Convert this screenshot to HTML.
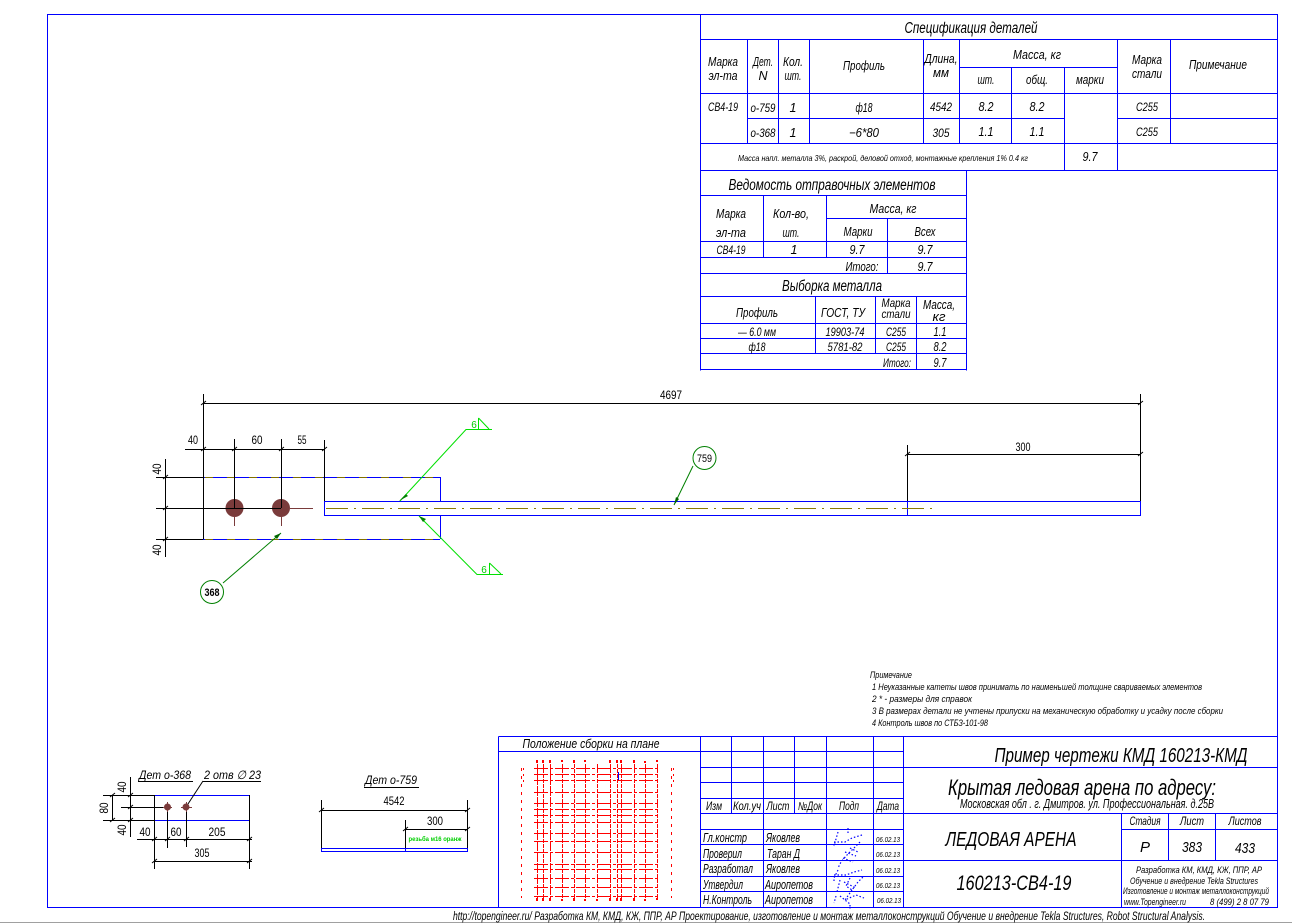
<!DOCTYPE html>
<html><head><meta charset="utf-8"><style>
html,body{margin:0;padding:0;background:#fff;width:1292px;height:923px;overflow:hidden}
svg{display:block;position:absolute;left:0;top:0}
.l{fill:none;stroke:#0000ff;stroke-width:1;shape-rendering:crispEdges}
.k{fill:none;stroke:#000;stroke-width:1;shape-rendering:crispEdges}
text{font-family:"Liberation Sans",sans-serif;font-style:italic;fill:#000;text-anchor:middle}
.s{text-anchor:start}
.d{font-style:normal}
</style></head><body>
<svg width="1292" height="923" viewBox="0 0 1292 923" xmlns="http://www.w3.org/2000/svg">
<rect width="1292" height="923" fill="#fff"/>
<path d="M0 922.5H1292" stroke="#a0a0a0" stroke-width="1" shape-rendering="crispEdges"/>
<!-- frames -->
<path class="l" d="M47.5 14.5H1277.5V907.5H47.5Z"/>
<!-- spec table -->
<path class="l" d="M700.5 14.5V370.5M700.5 39.5H1277M959 67.5H1117M700.5 93.5H1277M747 118.5H1064M1117 118.5H1277M700.5 143.5H1277M700.5 170.5H1277M747.5 39V143M778.5 39V143M809.5 39V143M923.5 39V143M959.5 39V143M1011.5 67V143M1064.5 67V170M1117.5 39V170M1170.5 39V143"/>
<!-- dispatch table -->
<path class="l" d="M966.5 170V370.5M700 195.5H966M826 218.5H966M700 241.5H966M700 257.5H966M700 273.5H966M700 296.5H966M700 323.5H966M700 338.5H966M700 353.5H966M700 369.5H966M763.5 195V257M826.5 195V257M887.5 218V273M815.5 296V353M875.5 296V353M916.5 296V369"/>
<!-- title block -->
<path class="l" d="M498.5 736.5H1277M498.5 736.5V907M498.5 751.5H700M700.5 736V907M731.5 736V813M763.5 736V907M794.5 736V813M826.5 736V907M873.5 736V907M903.5 736V907M700 751.5H903M700 767.5H1277M700 782.5H903M700 798.5H903M700 813.5H1277M700 829.5H903M1121 829.5H1277M700 844.5H903M700 860.5H1277M700 876.5H903M700 891.5H903M1121.5 813V907M1168.5 813V860M1215.5 813V860"/>
<!-- plan grid -->
<g fill="none" stroke="#ff0000" stroke-width="1" shape-rendering="crispEdges">
<path stroke-dasharray="14 2 3 2" d="M534 768.5H660M534 774.5H660M534 780.5H660M534 792.5H660M534 803.5H660M534 809.5H660M534 815.5H660M534 822.5H660M534 833.5H660M534 841.5H660M534 852.5H660M534 864.5H660M534 869.5H660M534 878.5H660M534 887.5H660M534 896.5H660"/>
<path stroke-dasharray="4 1" d="M543.5 764V900M562.5 764V900M574.5 764V900M585.5 764V900M597.5 764V900M610.5 764V900M617.5 764V900M621.5 764V900M634.5 764V900M645.5 764V900M657.5 764V900"/>
<path stroke-dasharray="10 1" d="M537.5 764V900M550.5 764V900"/>
<path stroke-dasharray="3 5" d="M521.5 768V898M671.5 768V898"/>
<path stroke-dasharray="2 4" d="M523.5 768V785M673.5 768V785"/>
<path stroke-width="2" d="M537 760V763M543 760V763M550 760V763M562 760V762M574 760V763M585 760V762M610 760V763M617 760V763M621 760V763M634 760V763M645 761V763M657 760V762M537 898V901M543 898V901M550 898V901M562 899V901M574 898V901M585 899V901M597 899V901M610 898V901M617 898V901M621 898V901M634 898V901M645 899V901M657 898V900"/>
</g>
<path d="M618.5 772V780" stroke="#0000ff" shape-rendering="crispEdges"/>
<!-- main drawing: blue -->
<path class="l" d="M324.5 501.5H1140.5V515.5H324.5ZM440.5 477V501M440.5 515V539M907.5 501V515"/>
<path fill="none" stroke="#0000ff" shape-rendering="crispEdges" d="M203 477.5H440M203 539.5H440"/>
<path fill="none" stroke="#807000" stroke-dasharray="8 14" shape-rendering="crispEdges" d="M205 477.5H440M205 539.5H440"/>
<path fill="none" stroke="#8a7a00" stroke-dasharray="22 6 2 6" shape-rendering="crispEdges" d="M326 508.5H935"/>
<path d="M290 508.5H313" stroke="#7a3b3b" shape-rendering="crispEdges"/>
<circle cx="234.5" cy="508" r="9" fill="#7a3b3b"/><circle cx="281" cy="508" r="9" fill="#7a3b3b"/>
<path d="M234.5 517V526M281.5 517V526" stroke="#7a3b3b" shape-rendering="crispEdges"/>
<!-- main dims -->
<path class="k" d="M203.5 394V539M1140.5 394V501M203 403.5H1140M185 449.5H324M234.5 439V508M281.5 439V508M324.5 440V501M165.5 459V557M156 477.5H203M156 508.5H281M156 539.5H203M907.5 445V501M907 454.5H1140"/>
<path d="M201 405l5-4M232 451l5-4M279 451l5-4M322 451l5-4M201 451l5-4M1138 405l5-4M1138 456l5-4M905 456l5-4M163 479l5-4M163 510l5-4M163 541l5-4" stroke="#000" stroke-width="1" fill="none"/>
<g font-size="12">
<text class="d" x="671" y="399" textLength="22" lengthAdjust="spacingAndGlyphs">4697</text>
<text class="d" x="1023" y="451" textLength="15" lengthAdjust="spacingAndGlyphs">300</text>
<text class="d" x="193" y="444" textLength="10" lengthAdjust="spacingAndGlyphs">40</text>
<text class="d" x="257" y="444" textLength="11" lengthAdjust="spacingAndGlyphs">60</text>
<text class="d" x="302" y="444" textLength="9" lengthAdjust="spacingAndGlyphs">55</text>
<text class="d" transform="translate(161 469) rotate(-90)" textLength="11" lengthAdjust="spacingAndGlyphs">40</text>
<text class="d" transform="translate(161 550) rotate(-90)" textLength="11" lengthAdjust="spacingAndGlyphs">40</text>
</g>
<!-- green -->
<g fill="none" stroke="#00e000" stroke-width="1">
<path d="M492 429.5H466L400 501M478.5 418V429M478.5 418L489 429M503 574.5H477L419 516M489.5 563V574M489.5 563L501 574"/>
</g>
<path d="M399 501l7-7 2 2z M419 516l7 3-3 3z" fill="#008000"/>
<text style="fill:#00cc00" class="d" x="474" y="428" font-size="10">6</text>
<text style="fill:#00cc00" class="d" x="484" y="573" font-size="10">6</text>
<path d="M223 583L281 533M693 466L674 505" stroke="#008000" fill="none"/>
<path d="M281 533l-7 3 3 3z M674 505l2-8 3 2z" fill="#006600"/>
<circle cx="212" cy="592" r="11.5" fill="#fff" stroke="#008000"/>
<circle cx="704.5" cy="458" r="11.5" fill="#fff" stroke="#008000"/>
<text class="d" x="212" y="596" font-size="11" font-weight="bold" textLength="15" lengthAdjust="spacingAndGlyphs">368</text>
<text class="d" x="704.5" y="462" font-size="11" textLength="15" lengthAdjust="spacingAndGlyphs">759</text>
<!-- spec text -->
<text x="971" y="33" font-size="15.5" textLength="133" lengthAdjust="spacingAndGlyphs">Спецификация деталей</text>
<g font-size="12.5">
<text x="723" y="66" textLength="30" lengthAdjust="spacingAndGlyphs">Марка</text>
<text x="723" y="80" textLength="29" lengthAdjust="spacingAndGlyphs">эл-та</text>
<text x="763" y="66" textLength="20" lengthAdjust="spacingAndGlyphs">Дет.</text>
<text x="763" y="80">N</text>
<text x="793" y="66" textLength="20" lengthAdjust="spacingAndGlyphs">Кол.</text>
<text x="793" y="80" textLength="17" lengthAdjust="spacingAndGlyphs">шт.</text>
<text x="864" y="70" textLength="42" lengthAdjust="spacingAndGlyphs">Профиль</text>
<text x="941" y="63" textLength="33" lengthAdjust="spacingAndGlyphs">Длина,</text>
<text x="941" y="77" textLength="16" lengthAdjust="spacingAndGlyphs">мм</text>
<text x="1037" y="59" textLength="48" lengthAdjust="spacingAndGlyphs">Масса, кг</text>
<text x="986" y="84" textLength="17" lengthAdjust="spacingAndGlyphs">шт.</text>
<text x="1037" y="84" textLength="22" lengthAdjust="spacingAndGlyphs">общ.</text>
<text x="1090" y="84" textLength="28" lengthAdjust="spacingAndGlyphs">марки</text>
<text x="1147" y="64" textLength="30" lengthAdjust="spacingAndGlyphs">Марка</text>
<text x="1147" y="78" textLength="30" lengthAdjust="spacingAndGlyphs">стали</text>
<text x="1218" y="69" textLength="58" lengthAdjust="spacingAndGlyphs">Примечание</text>
<text x="986" y="111" textLength="15" lengthAdjust="spacingAndGlyphs">8.2</text><text x="1037" y="111" textLength="15" lengthAdjust="spacingAndGlyphs">8.2</text>
<text x="986" y="136" textLength="15" lengthAdjust="spacingAndGlyphs">1.1</text><text x="1037" y="136" textLength="15" lengthAdjust="spacingAndGlyphs">1.1</text>
<text x="793" y="112">1</text><text x="793" y="137">1</text>
<text x="864" y="112" textLength="17" lengthAdjust="spacingAndGlyphs">ф18</text>
<text x="864" y="137" textLength="30" lengthAdjust="spacingAndGlyphs">−6*80</text>
<text x="1090" y="161" textLength="15" lengthAdjust="spacingAndGlyphs">9.7</text>
</g>
<g font-size="11.5">
<text x="723" y="111" textLength="30" lengthAdjust="spacingAndGlyphs">СВ4-19</text>
<text x="763" y="112" textLength="25" lengthAdjust="spacingAndGlyphs">о-759</text>
<text x="763" y="137" textLength="25" lengthAdjust="spacingAndGlyphs">о-368</text>
<text x="941" y="111" textLength="22" lengthAdjust="spacingAndGlyphs">4542</text>
<text x="941" y="137" textLength="17" lengthAdjust="spacingAndGlyphs">305</text>
<text x="1147" y="111" textLength="22" lengthAdjust="spacingAndGlyphs">С255</text>
<text x="1147" y="136" textLength="22" lengthAdjust="spacingAndGlyphs">С255</text>
</g>
<text x="883" y="161" font-size="8.5" textLength="290" lengthAdjust="spacingAndGlyphs">Масса напл. металла 3%, раскрой, деловой отход, монтажные крепления 1%   0.4 кг</text>
<!-- dispatch text -->
<text x="832" y="190" font-size="15.5" textLength="207" lengthAdjust="spacingAndGlyphs">Ведомость отправочных элементов</text>
<g font-size="12.5">
<text x="731" y="218" textLength="30" lengthAdjust="spacingAndGlyphs">Марка</text>
<text x="731" y="237" textLength="30" lengthAdjust="spacingAndGlyphs">эл-та</text>
<text x="791" y="218" textLength="36" lengthAdjust="spacingAndGlyphs">Кол-во,</text>
<text x="791" y="237" textLength="17" lengthAdjust="spacingAndGlyphs">шт.</text>
<text x="893" y="213" textLength="47" lengthAdjust="spacingAndGlyphs">Масса, кг</text>
<text x="858" y="236" textLength="29" lengthAdjust="spacingAndGlyphs">Марки</text>
<text x="925" y="236" textLength="21" lengthAdjust="spacingAndGlyphs">Всех</text>
<text x="794" y="254">1</text><text x="857" y="254" textLength="15" lengthAdjust="spacingAndGlyphs">9.7</text><text x="925" y="254" textLength="15" lengthAdjust="spacingAndGlyphs">9.7</text>
<text x="862" y="271" textLength="33" lengthAdjust="spacingAndGlyphs">Итого:</text><text x="925" y="271" textLength="15" lengthAdjust="spacingAndGlyphs">9.7</text>
<text x="757" y="317" textLength="42" lengthAdjust="spacingAndGlyphs">Профиль</text>
<text x="843" y="317" textLength="44" lengthAdjust="spacingAndGlyphs">ГОСТ, ТУ</text>
<text x="939" y="309" textLength="32" lengthAdjust="spacingAndGlyphs">Масса,</text>
<text x="939" y="321" textLength="13" lengthAdjust="spacingAndGlyphs">кг</text>
<text x="940" y="336" textLength="13" lengthAdjust="spacingAndGlyphs">1.1</text><text x="940" y="351" textLength="13" lengthAdjust="spacingAndGlyphs">8.2</text><text x="940" y="367" textLength="13" lengthAdjust="spacingAndGlyphs">9.7</text>
</g>
<g font-size="11.5">
<text x="731" y="254" textLength="29" lengthAdjust="spacingAndGlyphs">СВ4-19</text>
<text x="896" y="307" textLength="29" lengthAdjust="spacingAndGlyphs">Марка</text>
<text x="896" y="318" textLength="29" lengthAdjust="spacingAndGlyphs">стали</text>
<text x="757" y="336" textLength="38" lengthAdjust="spacingAndGlyphs">— 6.0 мм</text>
<text x="845" y="336" textLength="39" lengthAdjust="spacingAndGlyphs">19903-74</text>
<text x="896" y="336" textLength="20" lengthAdjust="spacingAndGlyphs">С255</text>
<text x="757" y="351" textLength="17" lengthAdjust="spacingAndGlyphs">ф18</text>
<text x="845" y="351" textLength="35" lengthAdjust="spacingAndGlyphs">5781-82</text>
<text x="896" y="351" textLength="20" lengthAdjust="spacingAndGlyphs">С255</text>
<text x="897" y="367" textLength="28" lengthAdjust="spacingAndGlyphs">Итого:</text>
</g>
<text x="832" y="291" font-size="15.5" textLength="100" lengthAdjust="spacingAndGlyphs">Выборка металла</text>
<!-- notes -->
<g font-size="9">
<text class="s" x="870" y="678" textLength="42" lengthAdjust="spacingAndGlyphs">Примечание</text>
<text class="s" x="872" y="690" textLength="330" lengthAdjust="spacingAndGlyphs">1  Неуказанные катеты швов принимать по наименьшей толщине свариваемых элементов</text>
<text class="s" x="872" y="702" textLength="100" lengthAdjust="spacingAndGlyphs">2   * - размеры для справок</text>
<text class="s" x="872" y="714" textLength="351" lengthAdjust="spacingAndGlyphs">3  В размерах детали не учтены припуски на механическую обработку  и усадку  после сборки</text>
<text class="s" x="872" y="726" textLength="116" lengthAdjust="spacingAndGlyphs">4  Контроль швов по СТБЗ-101-98</text>
</g>
<!-- detail 368 -->
<path class="l" d="M154.5 795.5H249.5V820.5H154.5Z"/>
<path class="k" d="M138 781.5H193M203 781.5H261M130.5 777V837M112.5 795V820M103 795.5H154M103 820.5H154M121 807.5H167M137 839.5H252M154 861.5H252M154.5 795V869M249.5 795V869M167.5 807V848M186.5 807V847"/>
<path d="M203 781L186 807M128 797l5-4M128 809l5-4M128 822l5-4M110 797l5-4M110 822l5-4M152 841l5-4M165 841l5-4M184 841l5-4M247 841l5-4M152 863l5-4M247 863l5-4" stroke="#000" fill="none"/>
<circle cx="167.5" cy="807" r="3.5" fill="#7a3b3b"/><circle cx="186" cy="807" r="3.5" fill="#7a3b3b"/>
<path d="M163 807.5H172M181 807.5H192M167.5 802V812M186.5 802V812" stroke="#7a3b3b" shape-rendering="crispEdges"/>
<text x="165" y="779" font-size="12" textLength="52" lengthAdjust="spacingAndGlyphs">Дет  о-368</text>
<text class="s" x="204" y="779" font-size="12" textLength="57" lengthAdjust="spacingAndGlyphs">2 отв ∅ 23</text>
<g font-size="12">
<text class="d" x="145" y="836" textLength="11" lengthAdjust="spacingAndGlyphs">40</text>
<text class="d" x="176" y="836" textLength="11" lengthAdjust="spacingAndGlyphs">60</text>
<text class="d" x="217" y="836" textLength="17" lengthAdjust="spacingAndGlyphs">205</text>
<text class="d" x="202" y="857" textLength="15" lengthAdjust="spacingAndGlyphs">305</text>
<text class="d" transform="translate(126 787) rotate(-90)" textLength="11" lengthAdjust="spacingAndGlyphs">40</text>
<text class="d" transform="translate(108 808) rotate(-90)" textLength="11" lengthAdjust="spacingAndGlyphs">80</text>
<text class="d" transform="translate(126 830) rotate(-90)" textLength="11" lengthAdjust="spacingAndGlyphs">40</text>
<text class="d" x="394" y="805" textLength="21" lengthAdjust="spacingAndGlyphs">4542</text>
<text class="d" x="435" y="825" textLength="16" lengthAdjust="spacingAndGlyphs">300</text>
</g>
<!-- detail 759 -->
<path class="l" d="M321.5 848.5H467.5V851.5H321.5ZM405.5 848V851"/>
<path class="k" d="M364 787.5H419M321.5 800V848M467.5 800V848M321 810.5H467M405.5 820V848M405 829.5H467"/>
<path d="M319 812l5-4M465 812l5-4M403 831l5-4M465 831l5-4" stroke="#000" fill="none"/>
<text x="391" y="784" font-size="12" textLength="52" lengthAdjust="spacingAndGlyphs">Дет  о-759</text>
<text class="d" style="fill:#00d000" x="435" y="841" font-size="6" font-weight="bold" textLength="53" lengthAdjust="spacingAndGlyphs">резьба м16 оранж</text>
<!-- title block text -->
<text x="591" y="748" font-size="13" textLength="137" lengthAdjust="spacingAndGlyphs">Положение сборки на плане</text>
<g font-size="11.5">
<text x="714" y="810" textLength="16" lengthAdjust="spacingAndGlyphs">Изм</text>
<text x="747" y="810" textLength="28" lengthAdjust="spacingAndGlyphs">Кол.уч</text>
<text x="778" y="810" textLength="23" lengthAdjust="spacingAndGlyphs">Лист</text>
<text x="810" y="810" textLength="24" lengthAdjust="spacingAndGlyphs">№Док</text>
<text x="849" y="810" textLength="20" lengthAdjust="spacingAndGlyphs">Подп</text>
<text x="888" y="810" textLength="22" lengthAdjust="spacingAndGlyphs">Дата</text>
</g>
<g font-size="12.5">
<text class="s" x="703" y="842" textLength="44" lengthAdjust="spacingAndGlyphs">Гл.констр</text>
<text class="s" x="703" y="858" textLength="39" lengthAdjust="spacingAndGlyphs">Проверил</text>
<text class="s" x="703" y="873" textLength="50" lengthAdjust="spacingAndGlyphs">Разработал</text>
<text class="s" x="703" y="889" textLength="40" lengthAdjust="spacingAndGlyphs">Утвердил</text>
<text class="s" x="703" y="904" textLength="49" lengthAdjust="spacingAndGlyphs">Н.Контроль</text>
<text class="s" x="766" y="842" textLength="34" lengthAdjust="spacingAndGlyphs">Яковлев</text>
<text class="s" x="767" y="858" textLength="33" lengthAdjust="spacingAndGlyphs">Таран Д</text>
<text class="s" x="766" y="873" textLength="34" lengthAdjust="spacingAndGlyphs">Яковлев</text>
<text class="s" x="765" y="889" textLength="48" lengthAdjust="spacingAndGlyphs">Аиропетов</text>
<text class="s" x="765" y="904" textLength="48" lengthAdjust="spacingAndGlyphs">Аиропетов</text>
</g>
<g font-size="7.5">
<text x="888" y="842" textLength="24" lengthAdjust="spacingAndGlyphs">06.02.13</text>
<text x="888" y="857" textLength="24" lengthAdjust="spacingAndGlyphs">06.02.13</text>
<text x="888" y="873" textLength="24" lengthAdjust="spacingAndGlyphs">06.02.13</text>
<text x="888" y="888" textLength="24" lengthAdjust="spacingAndGlyphs">06.02.13</text>
<text x="889" y="903" textLength="24" lengthAdjust="spacingAndGlyphs">06.02.13</text>
</g>
<!-- signatures -->
<path fill="none" stroke="#0000ff" stroke-width="1.2" stroke-dasharray="1.5 2" d="M848 828V834M838 832L834 846M834 842H845L852 838L862 835M860 842L852 850L846 856L841 862L838 868M850 848L858 852M845 852L856 856M843 858L853 862M838 870L834 878V882M834 875H846L854 872L862 870M840 880L837 892M850 878L846 886L852 890L858 882L864 876M844 882L856 888M836 896L834 903M852 890L845 900L856 895L864 898M850 905V909M840 896L850 904"/>
<text x="1121" y="762" font-size="20" textLength="253" lengthAdjust="spacingAndGlyphs">Пример чертежи КМД  160213-КМД</text>
<text x="1082" y="795" font-size="22" textLength="268" lengthAdjust="spacingAndGlyphs">Крытая ледовая арена по адресу:</text>
<text x="1087" y="808" font-size="12.5" textLength="254" lengthAdjust="spacingAndGlyphs">Московская обл . г. Дмитров. ул. Профессиональная. д.25В</text>
<text x="1011" y="846" font-size="20" textLength="131" lengthAdjust="spacingAndGlyphs">ЛЕДОВАЯ АРЕНА</text>
<text x="1014" y="890" font-size="21" textLength="115" lengthAdjust="spacingAndGlyphs">160213-СВ4-19</text>
<text x="1145" y="825" font-size="12" textLength="31" lengthAdjust="spacingAndGlyphs">Стадия</text>
<text x="1192" y="825" font-size="12" textLength="24" lengthAdjust="spacingAndGlyphs">Лист</text>
<text x="1245" y="825" font-size="12" textLength="33" lengthAdjust="spacingAndGlyphs">Листов</text>
<text x="1145" y="852" font-size="15">Р</text>
<text x="1192" y="852" font-size="15" textLength="20" lengthAdjust="spacingAndGlyphs">383</text>
<text x="1245" y="853" font-size="15" textLength="20" lengthAdjust="spacingAndGlyphs">433</text>
<g font-size="9">
<text x="1199" y="873" font-size="9.5" textLength="126" lengthAdjust="spacingAndGlyphs">Разработка КМ, КМД, КЖ, ППР, АР</text>
<text x="1194" y="884" textLength="128" lengthAdjust="spacingAndGlyphs">Обучение  и внедрение Tekla Structures</text>
<text x="1196" y="894" textLength="146" lengthAdjust="spacingAndGlyphs">Изготовление и монтаж металлоконструкций</text>
<text class="s" x="1124" y="905" textLength="62" lengthAdjust="spacingAndGlyphs">www.Topengineer.ru</text>
<text class="s" x="1210" y="905" textLength="59" lengthAdjust="spacingAndGlyphs">8 (499) 2 8 07 79</text>
</g>
<text class="s" x="453" y="920" font-size="12" textLength="752" lengthAdjust="spacingAndGlyphs">http://topengineer.ru/  Разработка КМ, КМД, КЖ, ППР, АР  Проектирование, изготовление и монтаж металлоконструкций  Обучение и внедрение Tekla Structures, Robot Structural Analysis.</text>
</svg>
</body></html>
